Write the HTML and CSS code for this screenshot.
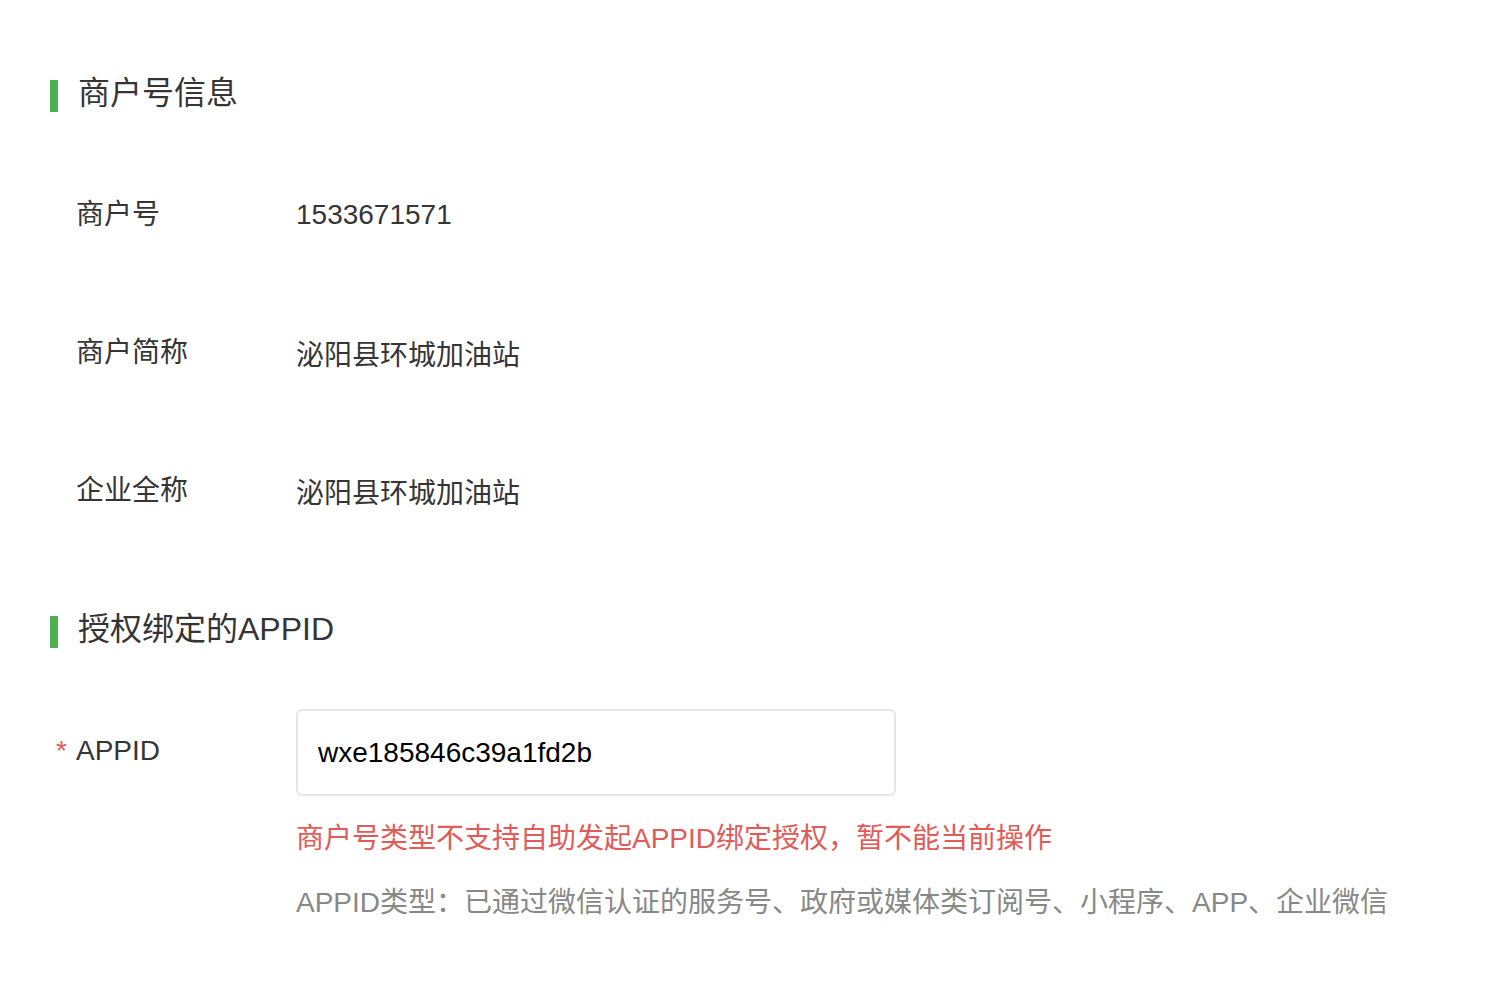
FILE: index.html
```html
<!DOCTYPE html>
<html lang="zh-CN">
<head>
    <meta charset="UTF-8">
    <title>商户号信息</title>
    <link rel="stylesheet" href="styles.css">
</head>
<body>

<div class="page">
    <!-- 商户号信息 -->
    <h2 class="section-title">商户号信息</h2>

    <div class="info-row first">
        <span class="info-label">商户号</span>
        <span class="info-value">1533671571</span>
    </div>
    <div class="info-row">
        <span class="info-label">商户简称</span>
        <span class="info-value">泌阳县环城加油站</span>
    </div>
    <div class="info-row">
        <span class="info-label">企业全称</span>
        <span class="info-value">泌阳县环城加油站</span>
    </div>

    <!-- 授权绑定的APPID -->
    <h2 class="section-title second">授权绑定的APPID</h2>

    <div class="form-row">
        <label class="info-label" for="appid"><span class="required">*</span>APPID</label>
        <div class="form-field">
            <input type="text" id="appid" class="text-input" value="wxe185846c39a1fd2b">
        </div>
    </div>
    <div class="form-tips">
        <p class="tip-error">商户号类型不支持自助发起APPID绑定授权，暂不能当前操作</p>
        <p class="tip-normal">APPID类型：已通过微信认证的服务号、政府或媒体类订阅号、小程序、APP、企业微信</p>
    </div>
</div>

</body>
</html>
```

FILE: styles.css
```css
body {
    margin: 0;
    padding: 0;
    background-color: #fff;
    font-family: "Liberation Sans", "Noto Sans CJK SC", sans-serif;
    color: #353535;
}

.page {
    padding: 80px 0 0 50px;
}

.section-title {
    margin: 0;
    padding-left: 20px;
    border-left: 8px solid #4caf50;
    height: 32px;
    line-height: 26px;
    font-size: 32px;
    font-weight: normal;
    color: #353535;
}

.section-title.second {
    margin-top: 106px;
}

.info-row {
    display: flex;
    align-items: center;
    height: 40px;
    margin-top: 98px;
    padding-left: 26px;
    font-size: 28px;
}

.info-row.first {
    margin-top: 82px;
}

.info-label {
    width: 220px;
    flex-shrink: 0;
    color: #353535;
    position: relative;
    top: -2px;
}

.info-value {
    color: #353535;
    position: relative;
    top: 1px;
}

.form-row {
    display: flex;
    align-items: center;
    margin-top: 61px;
    padding-left: 26px;
    font-size: 28px;
}

.required {
    display: inline-block;
    width: 20px;
    margin-left: -20px;
    color: #e15b58;
}

.text-input {
    box-sizing: border-box;
    width: 600px;
    height: 87px;
    padding: 0 20px;
    border: 2px solid #e5e5e5;
    border-radius: 6px;
    font-family: inherit;
    font-size: 28px;
    color: #000;
    outline: none;
}

.form-tips {
    padding-left: 246px;
    font-size: 28px;
}

.form-tips p {
    margin: 0;
    line-height: 40px;
}

.tip-error {
    margin-top: 23px !important;
    color: #e15b58;
}

.tip-normal {
    margin-top: 24px !important;
    color: #888;
}
```
